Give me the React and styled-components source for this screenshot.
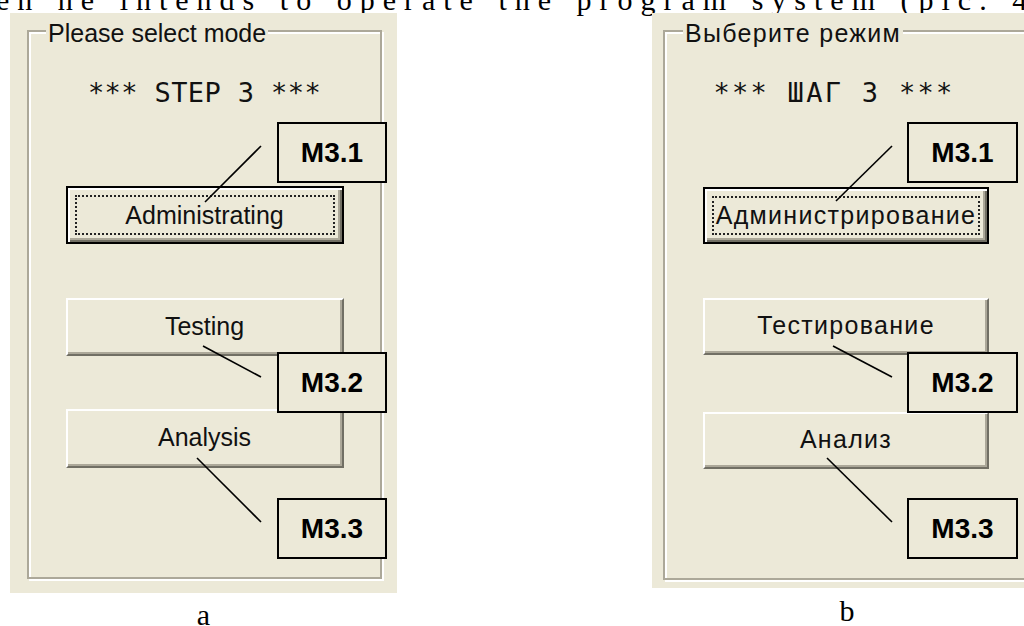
import React from 'react';
import styled, { createGlobalStyle } from 'styled-components';

const Global = createGlobalStyle`
  html, body { margin: 0; padding: 0; background: #fff; }
  body { width: 1024px; height: 626px; overflow: hidden; }
`;

const FACE = '#ECE9D8';

const Page = styled.div`
  width: 1024px;
  height: 626px;
  overflow: hidden;
  font-family: "Liberation Sans", Arial, sans-serif;
  color: #000;
`;

const Header = styled.div`
  display: flow-root;
  height: 13px;
  white-space: nowrap;
`;

const HeaderText = styled.div`
  margin-top: -15px;
  margin-left: -27px;
  font-family: "Liberation Serif", "Times New Roman", serif;
  font-size: 30px;
  line-height: 30px;
  letter-spacing: 8px;
  word-spacing: 2px;
`;

const Row = styled.div`
  display: flex;
  align-items: flex-start;
  padding-left: 10px;
`;

const Figure = styled.div`
  position: relative;
  flex: none;
  width: ${p => p.$w}px;
  margin-left: ${p => p.$ml || 0}px;
  display: flex;
  flex-direction: column;
`;

const Panel = styled.div`
  background: ${FACE};
  height: ${p => p.$h}px;
  box-sizing: border-box;
  padding: 2px ${p => p.$pr}px ${p => p.$pb}px ${p => p.$pl}px;
  display: flex;
  flex-direction: column;
`;

const GroupBox = styled.fieldset`
  flex: 1;
  margin: 0;
  padding: 0;
  min-width: 0;
  border: 2px solid #aca899;
  box-shadow: inset 2px 2px 0 #fff, 2px 2px 0 #fff;
  display: flex;
  flex-direction: column;
  align-items: center;
  letter-spacing: ${p => p.$ls || 0}px;
`;

const Legend = styled.legend`
  margin-left: ${p => p.$ml}px;
  padding: 6px 2px 0;
  background: ${FACE};
  font-size: 25px;
  line-height: 25px;
  color: #111;
`;

const StepText = styled.div`
  margin-top: 33px;
  padding-right: ${p => p.$shift || 0}px;
  font-family: "DejaVu Sans Mono", "Liberation Mono", monospace;
  font-size: 27px;
  line-height: 27px;
  letter-spacing: ${p => p.$ls || 0}px;
  white-space: pre;
  color: #111;
`;

const WinButton = styled.div`
  box-sizing: border-box;
  width: ${p => p.$w}px;
  height: ${p => p.$h}px;
  margin-top: ${p => p.$mt}px;
  background: ${FACE};
  font-size: 25px;
  color: #111;
  display: flex;
  align-items: stretch;
  ${p => p.$default ? `
    border: 2px solid #000;
    padding: 7px;
    box-shadow: inset 2px 2px 0 #fff, inset -2px -2px 0 #716f64, inset -4px -4px 0 #aca899;
  ` : `
    border: 2px solid;
    border-color: #fff #716f64 #716f64 #fff;
    box-shadow: inset -2px -2px 0 #aca899;
    padding: 0 0 2px;
  `}
`;

const Label = styled.div`
  flex: 1;
  display: flex;
  align-items: center;
  justify-content: center;
  white-space: nowrap;
  ${p => p.$focus ? 'border: 2px dotted #222;' : ''}
`;

const Callout = styled.div`
  position: absolute;
  left: ${p => p.$x}px;
  top: ${p => p.$y}px;
  width: ${p => p.$w}px;
  height: 61px;
  box-sizing: border-box;
  border: 2px solid #000;
  background: ${FACE};
  display: flex;
  align-items: center;
  justify-content: center;
  font-weight: bold;
  font-size: 28px;
`;

const Leaders = styled.svg`
  position: absolute;
  left: 0;
  top: 0;
  width: 100%;
  height: 100%;
  overflow: visible;
  pointer-events: none;
`;

const Caption = styled.div`
  margin-top: ${p => p.$mt}px;
  font-family: "Liberation Serif", "Times New Roman", serif;
  font-size: 30px;
  line-height: 22px;
  text-align: center;
`;

const figures = [
  {
    key: 'a',
    w: 387, ml: 0, h: 580, pl: 17, pr: 15, pb: 14, legendMl: 17, shift: 0,
    ls: 0, stepLs: 0.4,
    legend: 'Please select mode',
    step: '*** STEP 3 ***',
    btnW: 278,
    buttons: [
      { label: 'Administrating', h: 58, mt: 80, def: true },
      { label: 'Testing', h: 58, mt: 54 },
      { label: 'Analysis', h: 59, mt: 53 },
    ],
    boxX: 267, boxW: 110,
    boxes: [109, 339, 485],
    lines: [
      [251, 133, 195, 189],
      [193, 333, 251, 364],
      [187, 445, 251, 509],
    ],
    capMt: 11,
  },
  {
    key: 'b',
    w: 390, ml: 255, h: 575, pl: 11, pr: 13, pb: 8, legendMl: 18, shift: 24,
    ls: 1.3, stepLs: 2.3,
    legend: 'Выберите режим',
    step: '*** ШАГ 3 ***',
    btnW: 286,
    buttons: [
      { label: 'Администрирование', h: 57, mt: 81, def: true },
      { label: 'Тестирование', h: 57, mt: 54 },
      { label: 'Анализ', h: 57, mt: 57 },
    ],
    boxX: 255, boxW: 111,
    boxes: [109, 339, 485],
    lines: [
      [240, 133, 184, 188],
      [181, 333, 240, 364],
      [175, 445, 240, 509],
    ],
    capMt: 12,
  },
];

function Dialog({ f }) {
  return (
    <Figure $w={f.w} $ml={f.ml}>
      <Panel $h={f.h} $pl={f.pl} $pr={f.pr} $pb={f.pb}>
        <GroupBox $ls={f.ls}>
          <Legend $ml={f.legendMl}>{f.legend}</Legend>
          <StepText $shift={f.shift} $ls={f.stepLs}>{f.step}</StepText>
          {f.buttons.map(b => (
            <WinButton key={b.label} $w={f.btnW} $h={b.h} $mt={b.mt} $default={b.def}>
              <Label $focus={b.def}>{b.label}</Label>
            </WinButton>
          ))}
        </GroupBox>
      </Panel>
      <Caption $mt={f.capMt}>{f.key}</Caption>
      {f.boxes.map((y, i) => (
        <Callout key={y} $x={f.boxX} $y={y} $w={f.boxW}>M3.{i + 1}</Callout>
      ))}
      <Leaders>
        {f.lines.map(([x1, y1, x2, y2], i) => (
          <line key={i} x1={x1} y1={y1} x2={x2} y2={y2} stroke="#000" strokeWidth="1.6" />
        ))}
      </Leaders>
    </Figure>
  );
}

export default function App() {
  return (
    <Page>
      <Global />
      <Header>
        <HeaderText>hen he intends to operate the program system (pic. 4</HeaderText>
      </Header>
      <Row>
        {figures.map(f => <Dialog key={f.key} f={f} />)}
      </Row>
    </Page>
  );
}
